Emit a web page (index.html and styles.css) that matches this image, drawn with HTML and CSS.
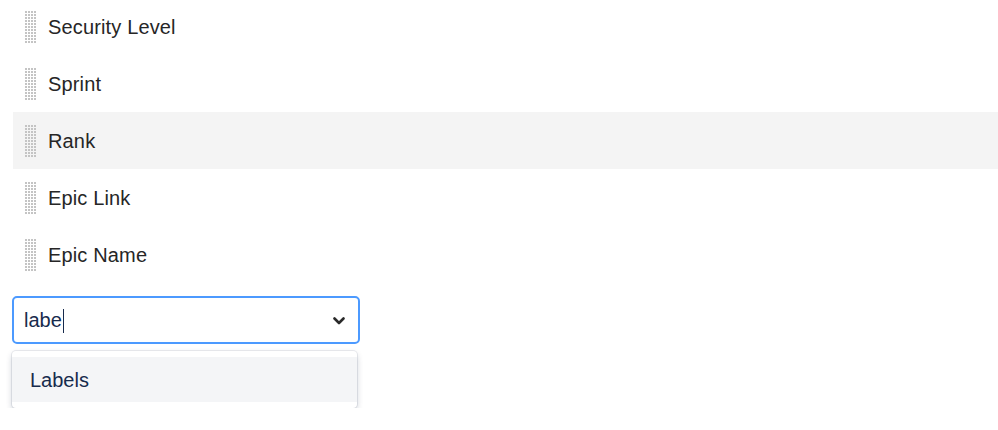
FILE: index.html
```html
<!DOCTYPE html>
<html lang="en">
<head>
<meta charset="utf-8">
<title>Fields</title>
<link rel="stylesheet" href="styles.css">
</head>
<body>
<div class="field-list">
  <div class="row"><span class="handle"></span><span class="label">Security Level</span></div>
  <div class="row"><span class="handle"></span><span class="label">Sprint</span></div>
  <div class="row row-hover"><span class="handle"></span><span class="label">Rank</span></div>
  <div class="row"><span class="handle"></span><span class="label">Epic Link</span></div>
  <div class="row"><span class="handle"></span><span class="label">Epic Name</span></div>
</div>
<div class="picker">
  <div class="select">
    <div class="value">labe<span class="caret"></span></div>
    <svg class="chevron" width="12" height="8" viewBox="0 0 12 8" aria-hidden="true"><path d="M1.5 1.5 L6 6 L10.5 1.5" fill="none" stroke="#2a2a2a" stroke-width="2.6" stroke-linecap="round" stroke-linejoin="round"/></svg>
  </div>
  <div class="menu">
    <div class="option">Labels</div>
  </div>
</div>
</body>
</html>
```
FILE: styles.css
```css
html, body {
  margin: 0;
  padding: 0;
  background: #ffffff;
  font-family: "Liberation Sans", Arial, sans-serif;
}

.field-list {
  margin-top: -2px;
  margin-left: 13px;
}

.row {
  height: 57px;
  display: flex;
  align-items: center;
  padding-left: 12px;
}

.row-hover {
  background: #f4f4f4;
}

.handle {
  width: 12px;
  height: 33px;
  margin-top: 1px;
  background-image: radial-gradient(circle at 1px 1px, #c4c4c4 0.8px, transparent 1.1px);
  background-size: 3px 3px;
}

.label {
  margin-left: 11px;
  padding-top: 2px;
  font-size: 20px;
  letter-spacing: 0.15px;
  color: #262626;
}

.picker {
  margin-left: 12px;
  margin-top: 13px;
}

.select {
  box-sizing: border-box;
  width: 348px;
  height: 48px;
  border: 2px solid #4c9aff;
  border-radius: 5px;
  display: flex;
  align-items: center;
  justify-content: space-between;
  padding: 0 13px 0 10px;
}

.value {
  font-size: 20px;
  color: #172b4d;
  display: flex;
  align-items: center;
  padding-top: 1px;
}

.caret {
  display: inline-block;
  width: 1px;
  height: 24px;
  background: #172b4d;
  margin-left: 1px;
}

.chevron {
  display: block;
  margin-top: 2px;
}

.menu {
  box-sizing: border-box;
  width: 345px;
  margin-top: 7px;
  padding: 6px 0;
  border-radius: 4px;
  background: #ffffff;
  box-shadow: 0 0 0 1px rgba(9, 30, 66, 0.08), 0 3px 6px rgba(9, 30, 66, 0.2);
}

.option {
  height: 45px;
  display: flex;
  align-items: center;
  padding-left: 18px;
  padding-top: 1px;
  box-sizing: border-box;
  background: #f4f5f7;
  font-size: 20px;
  color: #172b4d;
}
```
